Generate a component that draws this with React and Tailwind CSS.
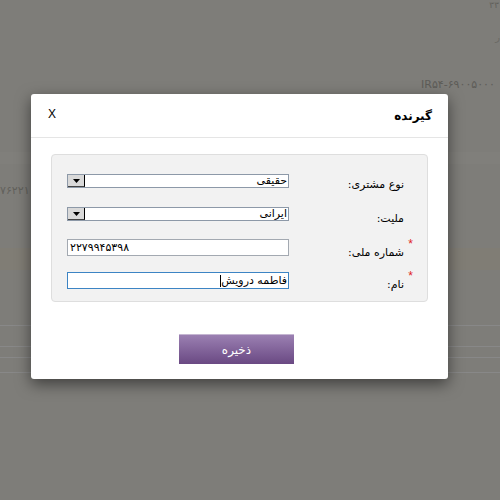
export default function App() {
  const Arrow = () => (
    <svg width="7" height="4" viewBox="0 0 7 4" className="mb-[3px]">
      <path d="M0 0h7L3.5 4z" fill="#000" />
    </svg>
  );
  const Select = ({ value }) => (
    <div className="w-[222px] h-[14px] border border-[#8d99a8] bg-white flex items-stretch">
      <div className="w-[17px] bg-[#d9d9d9] border-r border-r-black border-b border-b-[#444] flex items-end justify-center">
        <Arrow />
      </div>
      <div dir="rtl" className="flex-1 text-[11px] leading-[12px] pr-[1px] text-black whitespace-nowrap overflow-hidden">
        {value}
      </div>
    </div>
  );
  const Label = ({ text, req, mt }) => (
    <div className={`relative ${mt}`}>
      {req && (
        <span className="absolute -right-[9px] -top-[8px] text-[12px] leading-[12px] text-[#e02424] font-['Liberation_Sans',sans-serif]">
          *
        </span>
      )}
      <div dir="rtl" className="text-[11px] leading-[14px] text-black whitespace-nowrap">
        {text}
      </div>
    </div>
  );

  return (
    <div className="w-[500px] h-[500px] relative overflow-hidden bg-[#7e7d79] font-['DejaVu_Sans',sans-serif]">
      {/* dimmed page behind the modal */}
      <div className="flex flex-col">
        <div className="h-[10px] flex justify-end pr-[1px] text-[9px] leading-[10px] text-[#62615c]">۳۳</div>
        <div className="h-[68px] flex justify-end pt-[20px] text-[10px] text-[#6a6964]">ر</div>
        <div className="h-[14px] flex justify-start pl-[421px] whitespace-nowrap text-[11px] leading-[14px] text-[#5d5c58]">IR۵۴-۶۹۰۰۵۰۰۰</div>
        <div className="h-[60px]"></div>
        <div className="h-[12px] bg-[#807f7b]"></div>
        <div className="h-[20px]"></div>
        <div className="h-[14px] pl-[0px] text-[11px] leading-[14px] text-[#62615c] whitespace-nowrap">۷۶۲۲۱</div>
        <div className="h-[50px]"></div>
        <div className="h-[22px] bg-[#807d75]"></div>
        <div className="h-[55px]"></div>
        <div className="h-[1px] bg-[#888]"></div>
        <div className="h-[20px]"></div>
        <div className="h-[1px] bg-[#888]"></div>
        <div className="h-[10px]"></div>
        <div className="h-[1px] bg-[#888]"></div>
        <div className="h-[14px]"></div>
        <div className="h-[1px] bg-[#888]"></div>
      </div>

      {/* modal */}
      <div className="absolute left-[31px] top-[94px] w-[417px] h-[285px] bg-white rounded-[3px] shadow-[0_5px_15px_rgba(0,0,0,0.5)] flex flex-col">
        <div className="h-[44px] border-b border-[#e5e5e5] flex items-center justify-between pl-[17px] pr-[16px]">
          <span className="font-['Liberation_Sans',sans-serif] text-[12px] leading-[14px] text-black -mt-[3px]">X</span>
          <span dir="rtl" className="font-bold text-[12px] leading-[16px] text-black">گیرنده</span>
        </div>
        <div className="px-[20px] pt-[16px]">
          <div className="h-[148px] bg-[#f2f2f2] border border-[#dedede] rounded-[4px] pt-[19px] pl-[15px] pr-[23px] flex flex-col">
            <div className="h-[33px] flex justify-between items-start">
              <Select value="حقیقی" />
              <Label text="نوع مشتری:" mt="mt-[4px]" />
            </div>
            <div className="h-[32px] flex justify-between items-start">
              <Select value="ایرانی" />
              <Label text="ملیت:" mt="mt-[5px]" />
            </div>
            <div className="h-[33px] flex justify-between items-start">
              <div className="w-[222px] h-[17px] border border-[#a3a9b1] bg-white text-[11px] leading-[15px] pl-[2px] text-black">
                ۲۲۷۹۹۴۵۳۹۸
              </div>
              <Label text="شماره ملی:" req mt="mt-[7px]" />
            </div>
            <div className="h-[17px] flex justify-between items-start">
              <div dir="rtl" className="w-[222px] h-[17px] border border-[#3c84c4] bg-white text-[11px] leading-[15px] pr-[1px] text-black flex items-center">
                <span>فاطمه درویش</span>
                <span className="w-[1px] h-[12px] bg-black"></span>
              </div>
              <Label text="نام:" req mt="mt-[6px]" />
            </div>
          </div>
        </div>
        <div className="flex justify-center pt-[32px] pr-[6px]">
          <button className="w-[115px] h-[30px] bg-gradient-to-b from-[#9b80b2] to-[#6a4983] border-t border-[#c5b6d2] text-white text-[12px] leading-[14px]">
            ذخیره
          </button>
        </div>
      </div>
    </div>
  );
}
